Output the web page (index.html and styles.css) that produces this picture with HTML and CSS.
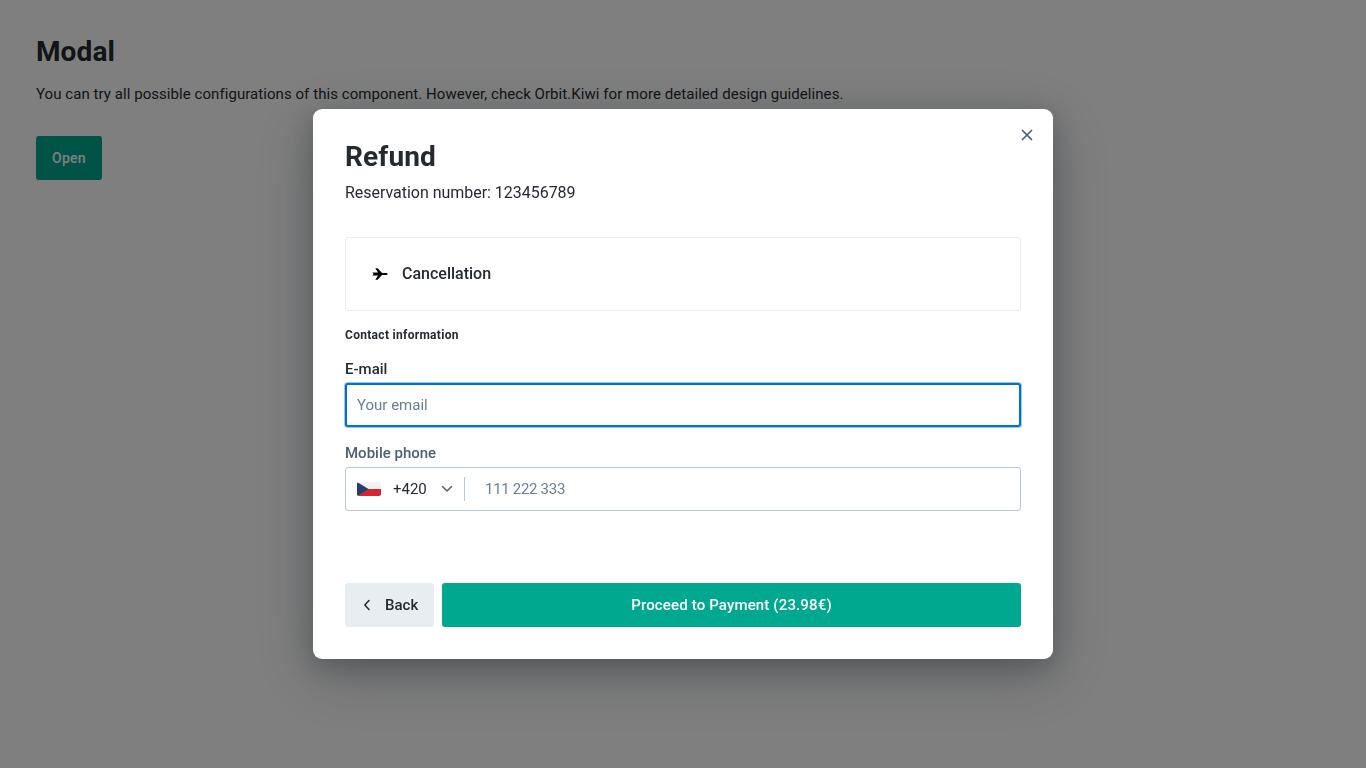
FILE: index.html
```html
<!DOCTYPE html>
<html lang="en">
<head>
    <meta charset="UTF-8">
    <meta name="viewport" content="width=device-width, initial-scale=1.0">
    <title>Modal</title>
    <link rel="stylesheet" href="styles.css">
</head>
<body>
    <h1 class="page-title">Modal</h1>
    <p class="page-text">You can try all possible configurations of this component. However, check Orbit.Kiwi for more detailed design guidelines.</p>
    <button class="open-button" type="button">Open</button>

    <div class="overlay">
        <div class="modal">
            <button class="close-button" type="button" aria-label="Close">
                <svg width="12" height="12" viewBox="0 0 12 12"><path d="M1.500 1.500l9 9M10.500 1.500l-9 9" stroke="#4f5e71" stroke-width="1.700" stroke-linecap="round" fill="none"/></svg>
            </button>

            <h2 class="modal-title">Refund</h2>
            <p class="modal-text">Reservation number: 123456789</p>

            <div class="card">
                <svg class="plane-icon" width="16" height="14" viewBox="0 0 16 14"><path d="M0.300 5.500h5.700L3.300 1.300h2.300l4.500 4.700h3.500c1.100 0 2.100.4 2.100 1s-1 1-2.100 1h-3.500l-4.500 4.700H3.300L6 8.500H0.300L1.600 7z" fill="#000"/></svg>
                <span class="card-title">Cancellation</span>
            </div>

            <h3 class="section-title">Contact information</h3>

            <form class="contact-form">
                <label class="field-label field-label-active" for="email">E-mail</label>
                <input class="text-input text-input-focus" type="text" id="email" placeholder="Your email">

                <label class="field-label" for="phone">Mobile phone</label>
                <div class="phone-input">
                    <div class="country">
                        <svg class="flag" width="24" height="14" viewBox="0 0 24 14"><rect width="24" height="7" fill="#f1f2f5"/><rect y="7" width="24" height="7" fill="#d32630"/><path d="M0 0l11.500 7L0 14z" fill="#1f3f72"/></svg>
                        <span class="country-code">+420</span>
                        <svg class="chevron" width="12" height="8" viewBox="0 0 12 8"><path d="M1.500 1.500L6 6l4.500-4.500" stroke="#4f5e71" stroke-width="1.500" stroke-linecap="round" stroke-linejoin="round" fill="none"/></svg>
                    </div>
                    <input class="phone-number" type="text" id="phone" placeholder="111 222 333">
                </div>
            </form>

            <div class="modal-footer">
                <button class="back-button" type="button">
                    <svg width="8" height="12" viewBox="0 0 8 12"><path d="M6 1.500L1.800 6 6 10.500" stroke="#252a31" stroke-width="1.500" stroke-linecap="round" stroke-linejoin="round" fill="none"/></svg>
                    Back
                </button>
                <button class="pay-button" type="button">Proceed to Payment (23.98€)</button>
            </div>
        </div>
    </div>
</body>
</html>
```

FILE: styles.css
```css
* {
    box-sizing: border-box;
}
body {
    font-family: Roboto, "Liberation Sans", sans-serif;
    margin: 0;
    padding: 36px;
    color: #252a31;
    background-color: #fff;
}
button, input {
    font-family: inherit;
}
.page-title {
    font-size: 28px;
    line-height: 32px;
    font-weight: 700;
    letter-spacing: 0.1px;
    margin: 0 0 14px;
}
.page-text {
    font-size: 15px;
    line-height: 24px;
    letter-spacing: 0.06px;
    margin: 0 0 30px;
}
.open-button {
    display: block;
    width: 66px;
    height: 44px;
    border: none;
    border-radius: 3px;
    background-color: #00a88f;
    color: #fff;
    font-size: 14px;
    font-weight: 500;
    letter-spacing: 0.25px;
}
.overlay {
    position: fixed;
    top: 0;
    left: 0;
    width: 100%;
    height: 100%;
    background-color: rgba(0, 0, 0, 0.5);
    display: flex;
    justify-content: center;
    align-items: flex-start;
    padding-top: 109px;
}
.modal {
    position: relative;
    width: 740px;
    padding: 32px;
    background-color: #fff;
    border-radius: 9px;
    box-shadow: 0 8px 24px rgba(37, 42, 49, 0.32), 0 16px 60px rgba(37, 42, 49, 0.3);
}
.close-button {
    position: absolute;
    top: 20px;
    right: 20px;
    width: 12px;
    height: 12px;
    padding: 0;
    border: none;
    background: none;
    display: flex;
}
.modal-title {
    font-size: 28px;
    line-height: 32px;
    font-weight: 700;
    letter-spacing: 0.1px;
    margin: 0 0 8px;
}
.modal-text {
    font-size: 16px;
    line-height: 24px;
    letter-spacing: -0.03px;
    margin: 0 0 32px;
}
.card {
    height: 74px;
    display: flex;
    align-items: center;
    padding: 0 0 1px 26px;
    border: 1px solid #e8edf1;
    border-radius: 3px;
    margin-bottom: 16px;
}
.plane-icon {
    margin-right: 14px;
}
.card-title {
    font-size: 16px;
    font-weight: 500;
}
.section-title {
    font-size: 12px;
    line-height: 16px;
    font-weight: 700;
    letter-spacing: 0.3px;
    margin: 0 0 16px;
}
.contact-form {
    margin-bottom: 72px;
}
.field-label {
    display: block;
    font-size: 15px;
    font-weight: 500;
    line-height: 20px;
    margin-bottom: 4px;
    color: #4f5e71;
}
.field-label-active {
    color: #252a31;
}
.text-input {
    display: block;
    width: 100%;
    height: 44px;
    padding: 0 12px;
    font-size: 15px;
    color: #252a31;
    border: 1px solid #bac7d5;
    border-radius: 3px;
    outline: none;
    margin-bottom: 16px;
}
.text-input-focus {
    border: 2px solid #0172cb;
    padding: 0 10px;
    box-shadow: 0 0 0 1px rgba(1, 114, 203, 0.4);
}
input::placeholder {
    color: #697d95;
    opacity: 1;
}
.phone-input {
    display: flex;
    align-items: center;
    height: 44px;
    border: 1px solid #bac7d5;
    border-radius: 3px;
}
.country {
    display: flex;
    align-items: center;
    width: 119px;
    height: 24px;
    padding-left: 11px;
    border-right: 1px solid #bac7d5;
}
.flag {
    border-radius: 2px;
    margin-right: 12px;
}
.country-code {
    width: 33px;
    font-size: 15px;
    margin-right: 15px;
}
.phone-number {
    flex: 1;
    height: 100%;
    padding: 0 20px;
    border: none;
    background: none;
    outline: none;
    font-size: 15px;
    letter-spacing: -0.3px;
}
.modal-footer {
    display: flex;
    gap: 8px;
}
.back-button {
    display: flex;
    align-items: center;
    gap: 14px;
    width: 89px;
    height: 44px;
    padding: 0 0 0 18px;
    border: none;
    border-radius: 3px;
    background-color: #e8edf1;
    color: #252a31;
    font-size: 15px;
    font-weight: 500;
}
.pay-button {
    flex: 1;
    height: 44px;
    border: none;
    border-radius: 3px;
    background-color: #00a88f;
    color: #fff;
    font-size: 15px;
    font-weight: 500;
    letter-spacing: 0.15px;
}
```
